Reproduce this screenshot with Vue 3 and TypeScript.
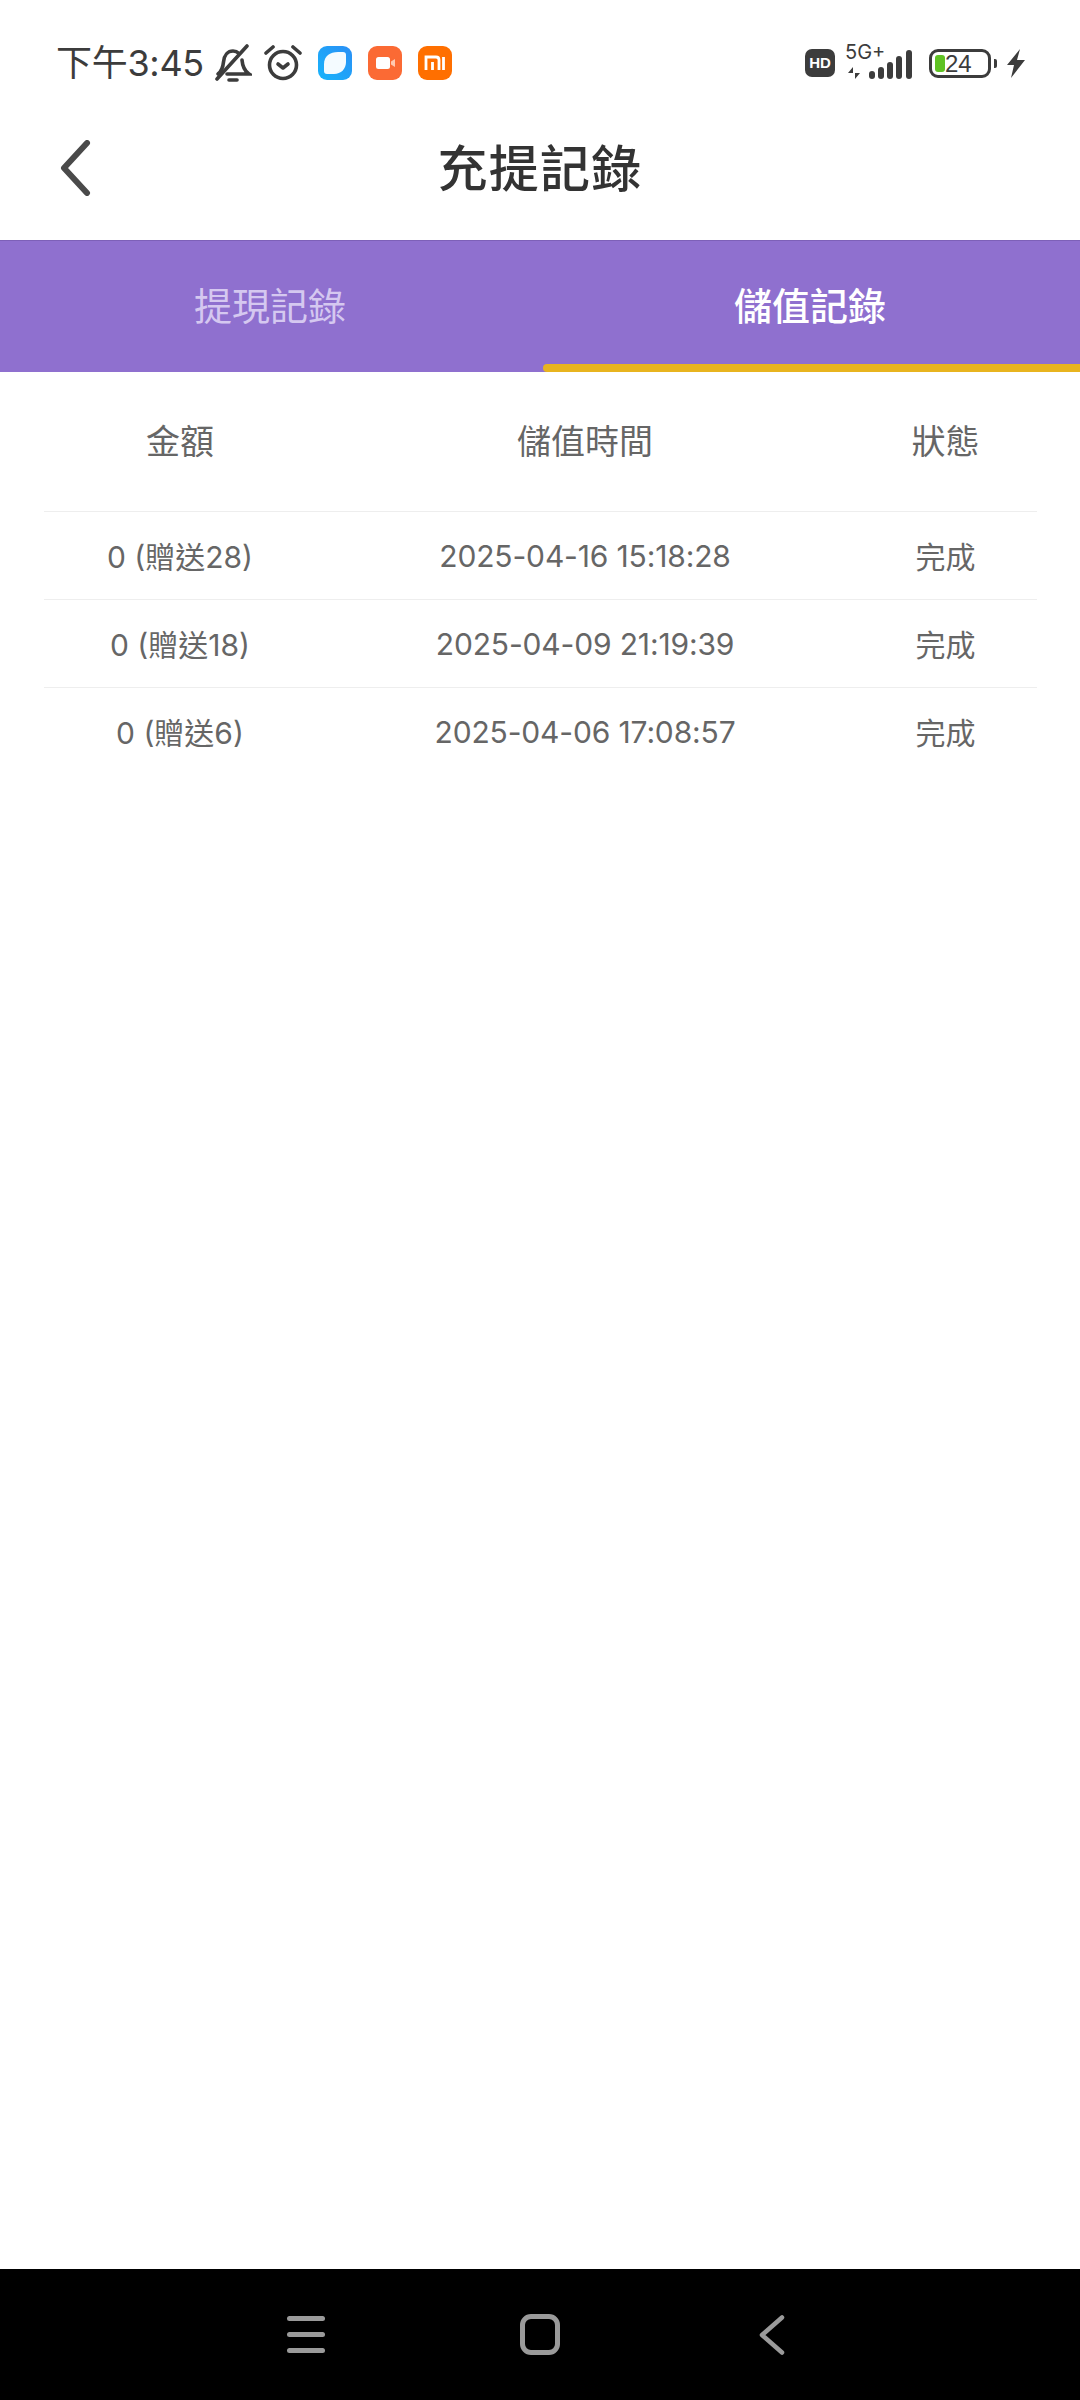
<script setup lang="ts">
import { ref } from 'vue'

interface DepositRecord {
  amount: string
  time: string
  status: string
}

const records = ref<DepositRecord[]>([
  { amount: '0 (贈送28)', time: '2025-04-16 15:18:28', status: '完成' },
  { amount: '0 (贈送18)', time: '2025-04-09 21:19:39', status: '完成' },
  { amount: '0 (贈送6)', time: '2025-04-06 17:08:57', status: '完成' },
])

const signalBars = [
  { x: 24, h: 8 },
  { x: 33, h: 12 },
  { x: 42, h: 17 },
  { x: 51, h: 23 },
  { x: 61, h: 29 },
]
</script>

<template>
  <div class="page">
    <div class="status-bar">
      <span class="clock">下午3:45</span>
      <svg class="icon-bell" width="38" height="38" viewBox="0 0 38 38" fill="none" stroke="#3c3c3c" stroke-width="3.600" stroke-linecap="round">
        <path d="M4 30c4-3 5-7 5.500-12 .6-7 4.500-11 9.500-11 2.500 0 4.500 1 6 2.500" />
        <path d="M28 16c.5 6 2.500 11 7 14H13" />
        <path d="M3 35 33 2" />
        <path d="M15 36h8" />
      </svg>
      <svg class="icon-alarm" width="38" height="36" viewBox="0 0 38 36" fill="none" stroke="#3c3c3c" stroke-width="3.600" stroke-linecap="round" stroke-linejoin="round">
        <circle cx="19" cy="20" r="13.500" />
        <path d="M14 19l5 4 5-4" />
        <path d="M2 8l7-6" />
        <path d="M36 8l-7-6" />
      </svg>
      <div class="app-icons">
        <svg width="34" height="34" viewBox="0 0 34 34">
          <defs>
            <linearGradient id="blueApp" x1="0" y1="1" x2="1" y2="0">
              <stop offset="0" stop-color="#18b4fb" />
              <stop offset="1" stop-color="#2a8ff5" />
            </linearGradient>
          </defs>
          <rect width="34" height="34" rx="9" fill="url(#blueApp)" />
          <path d="M6 18C6 10 12 6 20 6h5c2 0 3 1 3 3v7c0 7-5 12-12 12H9c-2 0-3-1-3-3z" fill="#f4fbff" />
        </svg>
        <svg width="34" height="34" viewBox="0 0 34 34">
          <rect width="34" height="34" rx="9" fill="#fb6a34" />
          <rect x="8" y="11" width="14" height="12" rx="2.500" fill="#fff" />
          <path d="M23 15.500l4-2.500v8l-4-2.500z" fill="#ffc9b0" />
        </svg>
        <svg width="34" height="34" viewBox="0 0 34 34">
          <rect width="34" height="34" rx="9" fill="#ff6f00" />
          <path d="M8 24V11h10c2 0 3 1.200 3 3v10M14.500 16v8M8 24" fill="none" stroke="#fff" stroke-width="2.800" />
          <path d="M25.500 11v13" stroke="#fff" stroke-width="2.800" />
        </svg>
      </div>
      <div class="status-right">
        <span class="hd-badge">HD</span>
        <div class="signal">
          <span class="signal-label">5G+</span>
          <svg width="68" height="29" viewBox="0 0 68 29" fill="#3c3c3c">
            <path d="M8 29v-6H3l5-6zM10 17v6h5l-5 6z" />
            <rect v-for="bar in signalBars" :key="bar.x" :x="bar.x" :y="29 - bar.h" width="6" :height="bar.h" rx="3" />
          </svg>
        </div>
        <div class="battery">
          <span class="battery-shell">
            <span class="battery-fill"></span>
            <span class="battery-level">24</span>
          </span>
          <span class="battery-nub"></span>
        </div>
        <svg width="20" height="29" viewBox="0 0 20 29" fill="#3c3c3c">
          <path d="M14 0 1 16h7l-3 13L19 11h-8z" />
        </svg>
      </div>
    </div>

    <header class="nav-bar">
      <svg class="back" width="34" height="56" viewBox="0 0 34 56" fill="none" stroke="#4a4a4a" stroke-width="6" stroke-linecap="round" stroke-linejoin="round">
        <path d="M29 3 6 28l23 25" />
      </svg>
      <h1 class="title">充提記錄</h1>
    </header>

    <div class="tabs">
      <div class="tab">提現記錄</div>
      <div class="tab active">儲值記錄</div>
    </div>

    <main class="table">
      <div class="row head">
        <span>金額</span>
        <span>儲值時間</span>
        <span>狀態</span>
      </div>
      <div v-for="item in records" :key="item.time" class="row">
        <span>{{ item.amount }}</span>
        <span class="time">{{ item.time }}</span>
        <span>{{ item.status }}</span>
      </div>
    </main>

    <footer class="system-nav">
      <div class="menu-icon">
        <span></span>
        <span></span>
        <span></span>
      </div>
      <span class="home-icon"></span>
      <svg width="26" height="40" viewBox="0 0 26 40" fill="none" stroke="#9a9a9a" stroke-width="4.500" stroke-linecap="round" stroke-linejoin="round">
        <path d="M23 2.500 3 20l20 17.500" />
      </svg>
    </footer>
  </div>
</template>

<style>
html,
body {
  margin: 0;
  background: #fff;
}
</style>

<style scoped>
.page {
  width: 1080px;
  height: 2400px;
  display: flex;
  flex-direction: column;
  background: #fff;
  font-family: Inter, "Noto Sans CJK TC", sans-serif;
  overflow: hidden;
}

.status-bar {
  height: 80px;
  box-sizing: border-box;
  padding: 46px 54px 0 56px;
  display: flex;
  align-items: center;
  color: #3c3c3c;
}

.clock {
  font-size: 36px;
  line-height: 36px;
  letter-spacing: -0.3px;
  width: 158px;
}

.icon-bell {
  margin-right: 12px;
}

.icon-alarm {
  margin-right: 16px;
}

.app-icons {
  display: flex;
  gap: 16px;
}

.status-right {
  margin-left: auto;
  display: flex;
  align-items: center;
}

.hd-badge {
  width: 30px;
  height: 28px;
  border-radius: 7px;
  background: #3c3c3c;
  color: #fff;
  font-size: 15px;
  font-weight: 800;
  line-height: 28px;
  text-align: center;
  margin-right: 10px;
  font-family: "Liberation Sans", sans-serif;
}

.signal {
  width: 68px;
  height: 32px;
  position: relative;
  margin-right: 16px;
}

.signal svg {
  position: absolute;
  right: 0;
  bottom: 0;
}

.signal-label {
  position: absolute;
  left: 0;
  top: -5px;
  font-size: 20px;
  line-height: 20px;
  color: #3c3c3c;
}

.battery {
  display: flex;
  align-items: center;
  margin-right: 9px;
}

.battery-shell {
  width: 62px;
  height: 29px;
  box-sizing: border-box;
  border: 3px solid #3c3c3c;
  border-radius: 9px;
  padding: 3px;
  display: flex;
  align-items: stretch;
}

.battery-fill {
  width: 10px;
  border-radius: 3px;
  background: #5fc223;
}

.battery-level {
  font-size: 24px;
  line-height: 17px;
  margin-left: 0;
  color: #3c3c3c;
  font-family: "Liberation Sans", sans-serif;
}

.battery-nub {
  width: 3px;
  height: 9px;
  margin-left: 3px;
  border-radius: 0 2px 2px 0;
  background: #3c3c3c;
}

.nav-bar {
  height: 160px;
  position: relative;
  display: flex;
  align-items: center;
  justify-content: center;
}

.back {
  position: absolute;
  left: 58px;
  top: 60px;
}

.title {
  margin: 0;
  font-size: 50px;
  font-weight: 500;
  line-height: 60px;
  color: #333;
  letter-spacing: 1.200px;
  position: relative;
  top: 9px;
}

.tabs {
  height: 132px;
  display: flex;
  background: #8f70cf;
  border-top: 1px solid #7d60b8;
  box-sizing: border-box;
}

.tab {
  flex: 1;
  display: flex;
  align-items: center;
  justify-content: center;
  font-size: 38px;
  color: #d5c8f0;
  box-sizing: border-box;
  padding-bottom: 6px;
}

.tab.active {
  color: #fff;
  font-weight: 500;
  position: relative;
}

.tab.active::after {
  content: "";
  position: absolute;
  left: 3px;
  right: 0;
  bottom: 0;
  height: 8px;
  border-radius: 4px 0 0 4px;
  background: #e8b41f;
}

.table {
  flex: 1;
  padding: 0 43px 0 44px;
}

.row {
  display: grid;
  grid-template-columns: 272px 538px 1fr;
  height: 88px;
  align-items: center;
  text-align: center;
  font-size: 30px;
  color: #666;
  border-bottom: 1px solid #eeeeee;
  box-sizing: border-box;
  padding-bottom: 2px;
}

.row:last-child {
  border-bottom: 0;
}

.row .time {
  letter-spacing: -0.150px;
  padding-top: 2px;
}

.row.head {
  height: 140px;
  font-size: 34px;
  color: #666;
  padding-bottom: 4px;
}

.system-nav {
  height: 131px;
  background: #000;
  flex-shrink: 0;
  display: flex;
  align-items: center;
  justify-content: space-between;
  padding: 0 295px 0 287px;
  box-sizing: border-box;
}

.menu-icon {
  width: 38px;
  display: flex;
  flex-direction: column;
  gap: 11px;
}

.menu-icon span {
  height: 5px;
  border-radius: 3px;
  background: #9a9a9a;
}

.home-icon {
  width: 40px;
  height: 41px;
  box-sizing: border-box;
  border: 5px solid #9a9a9a;
  border-radius: 11px;
  margin-left: -5px;
}
</style>
